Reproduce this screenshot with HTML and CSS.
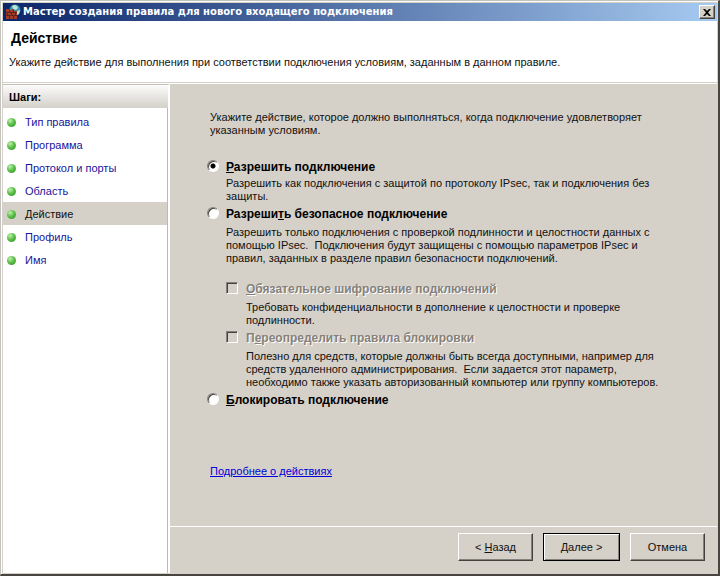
FILE: index.html
```
<!DOCTYPE html>
<html lang="ru">
<head>
<meta charset="utf-8">
<meta name="viewport" content="width=device-width, initial-scale=1">
<title>Мастер создания правила для нового входящего подключения</title>
<link rel="stylesheet" href="styles.css">
</head>
<body>
<div class="window">
	<div class="titlebar">
		<svg class="title-icon" width="16" height="16" viewBox="0 0 16 16" aria-hidden="true">
			<circle cx="10" cy="6" r="5.5" fill="#3f8fb5"/>
			<path d="M7 2q3-2 5 0l1 2-2 2-3-1zM12 7l3-1-1 4-2 1z" fill="#b9e6d0"/>
			<path d="M1 5h3v1h3V5h2v2h3v8H1z" fill="#a03c28"/>
			<path d="M1 8.5h11M1 11.5h11M4.500 6v2.500M8.500 6v2.500M2.500 9v2.500M6.500 9v2.500M10.500 9v2.500M4.500 12v3M8.500 12v3" stroke="#5c2620" fill="none"/>
		</svg>
		<span class="title-text">Мастер создания правила для нового входящего подключения</span>
		<button class="close" type="button" aria-label="Закрыть">
			<svg width="8" height="7" viewBox="0 0 8 7"><path d="M0 0h2l2 2 2-2h2L5 3.500 8 7H6L4 5 2 7H0l3-3.500z" fill="#000"/></svg>
		</button>
	</div>
	<header class="header">
		<h1>Действие</h1>
		<p>Укажите действие для выполнения при соответствии подключения условиям, заданным в данном правиле.</p>
	</header>
	<div class="main">
		<nav class="steps">
			<h2>Шаги:</h2>
			<ul>
				<li><a href="#">Тип правила</a></li>
				<li><a href="#">Программа</a></li>
				<li><a href="#">Протокол и порты</a></li>
				<li><a href="#">Область</a></li>
				<li class="current"><a href="#" aria-current="step">Действие</a></li>
				<li><a href="#">Профиль</a></li>
				<li><a href="#">Имя</a></li>
			</ul>
		</nav>
		<form class="page">
			<div class="content">
				<p class="intro">Укажите действие, которое должно выполняться, когда подключение удовлетворяет<br>указанным условиям.</p>
				<div class="option">
					<input type="radio" name="action" id="allow" checked>
					<label for="allow"><u>Р</u>азрешить подключение</label>
					<p>Разрешить как подключения с защитой по протоколу IPsec, так и подключения без<br>защиты.</p>
				</div>
				<div class="option secure">
					<input type="radio" name="action" id="secure">
					<label for="secure">Разреши<u>т</u>ь безопасное подключение</label>
					<p>Разрешить только подключения с проверкой подлинности и целостности данных с<br>помощью IPsec.&nbsp; Подключения будут защищены с помощью параметров IPsec и<br>правил, заданных в разделе правил безопасности подключений.</p>
				</div>
				<div class="option sub">
					<input type="checkbox" id="encrypt" disabled>
					<label for="encrypt"><u>О</u>бязательное шифрование подключений</label>
					<p>Требовать конфиденциальности в дополнение к целостности и проверке<br>подлинности.</p>
				</div>
				<div class="option sub">
					<input type="checkbox" id="override" disabled>
					<label for="override">П<u>е</u>реопределить правила блокировки</label>
					<p>Полезно для средств, которые должны быть всегда доступными, например для<br>средств удаленного администрирования.&nbsp; Если задается этот параметр,<br>необходимо также указать авторизованный компьютер или группу компьютеров.</p>
				</div>
				<div class="option">
					<input type="radio" name="action" id="block">
					<label for="block"><u>Б</u>локировать подключение</label>
				</div>
				<a class="more" href="#">Подробнее о действиях</a>
			</div>
			<div class="buttons">
				<button type="button">&lt; <u>Н</u>азад</button>
				<button type="button" class="default"><u>Д</u>алее &gt;</button>
				<button type="button" class="cancel">Отмена</button>
			</div>
		</form>
	</div>
</div>
</body>
</html>
```
FILE: styles.css
```
* { box-sizing: border-box; }
body {
	margin: 0;
	font: 11px/13px "Liberation Sans", Arial, sans-serif;
	color: #111;
	background: #d5d0c8;
}
h1, h2, p, ul {
	margin: 0;
	padding: 0;
}
.window {
	display: flex;
	flex-direction: column;
	min-height: 100vh;
	border: 1px solid #c4c2be;
	border-right: 2px solid #48443f;
	border-bottom: 2px solid #48443f;
	padding: 2px 1px 1px 2px;
	box-shadow: inset 1px 1px 0 #fff;
}
.titlebar {
	display: flex;
	align-items: center;
	height: 18px;
	padding: 0 2px 0 2px;
	background: linear-gradient(to right, #0b2569, #a6caf0);
}
.title-text {
	flex: 1;
	margin-left: 2px;
	font: bold 10px/18px "DejaVu Sans", Tahoma, sans-serif;
	color: #fff;
	white-space: nowrap;
}
button {
	font: inherit;
	color: #111;
	background: #d5d0c8;
	border: 1px solid;
	border-color: #fff #45423e #45423e #fff;
	border-radius: 0;
	box-shadow: inset -1px -1px 0 #85817b;
	padding: 0;
}
.close {
	display: flex;
	align-items: center;
	justify-content: center;
	width: 16px;
	height: 14px;
}
.header {
	height: 62px;
	padding: 9px 6px 0;
	background: #fff;
	border-bottom: 1px solid #d5d0c8;
}
.header h1 {
	margin-left: 2px;
	font: bold 14px/16px "Liberation Sans", Arial, sans-serif;
	color: #000;
}
.header p { margin-top: 10px; }
.main {
	display: flex;
	flex: 1;
	border-top: 1px solid #fff;
}
.steps {
	width: 167px;
	background: #fff;
	border-top: 1px solid #c5c1ba;
	border-right: 2px solid #fff;
	box-shadow: inset -1px 0 0 #bdbab4;
}
.steps h2 {
	height: 23px;
	padding-left: 6px;
	font-size: 11px;
	line-height: 24px;
	color: #000;
	background: linear-gradient(#fbfbfa, #d5d1ca);
}
.steps ul {
	margin-top: 2px;
	padding-right: 1px;
	list-style: none;
}
.steps li {
	display: flex;
	align-items: center;
	height: 23px;
	padding: 2px 0 0 4px;
}
.steps li::before {
	content: "";
	width: 9px;
	height: 9px;
	margin-right: 9px;
	border-radius: 50%;
	background: radial-gradient(circle at 35% 30%, #c2f0b0, #5cc048 45%, #2f8f2c);
}
.steps a {
	color: #1a149c;
	text-decoration: none;
}
.steps .current { background: #d5d0c8; }
.steps .current a { color: #111; }
.page {
	display: flex;
	flex: 1;
	flex-direction: column;
}
.content {
	flex: 1;
	padding: 27px 20px 0 37px;
}
.intro { margin: 0 0 23px 3px; }
.option {
	display: grid;
	grid-template-columns: 12px 1fr;
	column-gap: 7px;
	margin-bottom: 4px;
}
.option label {
	justify-self: start;
	font-size: 12px;
	font-weight: bold;
	line-height: 14px;
	color: #000;
}
.option p {
	grid-column: 2;
	margin-top: 3px;
}
.option.secure p {
	margin-top: 5px;
	margin-bottom: 13px;
}
.option.sub {
	column-gap: 8px;
	margin-left: 19px;
}
.option.sub p { margin-top: 5px; }
.option.sub label {
	color: #85817b;
	text-shadow: 1px 1px 0 #fff;
}
.option input {
	appearance: none;
	width: 12px;
	height: 12px;
	margin: 0;
	background: #fff;
	border: 1px solid;
	border-color: #85817b #fff #fff #85817b;
	box-shadow: inset 1px 1px 0 #45423e;
}
.option input[type="radio"] { border-radius: 50%; }
.option input[type="radio"]:checked {
	background: radial-gradient(circle, #000 2px, #fff 3px);
}
.option input:disabled { background: #d5d0c8; }
.more {
	display: inline-block;
	margin: 54px 0 0 3px;
	color: #0000d8;
}
.buttons {
	display: flex;
	justify-content: flex-end;
	gap: 10px;
	padding: 6px 12px 12px;
	border-top: 1px solid #fff;
}
.buttons button {
	width: 75px;
	height: 28px;
}
.buttons .default {
	width: 77px;
	border-color: #000;
	box-shadow: inset 1px 1px 0 #fff, inset -1px -1px 0 #85817b;
}
```
